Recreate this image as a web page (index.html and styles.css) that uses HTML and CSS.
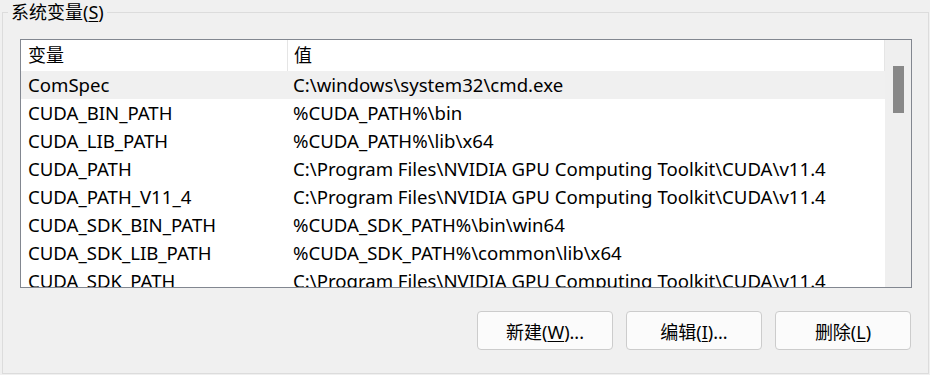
FILE: index.html
```html
<!DOCTYPE html>
<html lang="zh">
<head>
<meta charset="utf-8">
<title>系统变量</title>
<link rel="stylesheet" href="styles.css">
</head>
<body>
<div class="group">
  <div class="group-title">系统变量(<u>S</u>)</div>
  <div class="list">
    <div class="list-main">
      <div class="row header">
        <div class="c1">变量</div>
        <div class="c2">值</div>
      </div>
      <div class="row hl"><div class="c1">ComSpec</div><div class="c2">C:\windows\system32\cmd.exe</div></div>
      <div class="row"><div class="c1">CUDA_BIN_PATH</div><div class="c2">%CUDA_PATH%\bin</div></div>
      <div class="row"><div class="c1">CUDA_LIB_PATH</div><div class="c2">%CUDA_PATH%\lib\x64</div></div>
      <div class="row"><div class="c1">CUDA_PATH</div><div class="c2">C:\Program Files\NVIDIA GPU Computing Toolkit\CUDA\v11.4</div></div>
      <div class="row"><div class="c1">CUDA_PATH_V11_4</div><div class="c2">C:\Program Files\NVIDIA GPU Computing Toolkit\CUDA\v11.4</div></div>
      <div class="row"><div class="c1">CUDA_SDK_BIN_PATH</div><div class="c2">%CUDA_SDK_PATH%\bin\win64</div></div>
      <div class="row"><div class="c1">CUDA_SDK_LIB_PATH</div><div class="c2">%CUDA_SDK_PATH%\common\lib\x64</div></div>
      <div class="row"><div class="c1">CUDA_SDK_PATH</div><div class="c2">C:\Program Files\NVIDIA GPU Computing Toolkit\CUDA\v11.4</div></div>
    </div>
    <div class="scrollbar"><div class="thumb"></div></div>
  </div>
  <div class="buttons">
    <button class="btn">新建(<u>W</u>)...</button>
    <button class="btn">编辑(<u>I</u>)...</button>
    <button class="btn">删除(<u>L</u>)</button>
  </div>
</div>
</body>
</html>
```
FILE: styles.css
```css
html, body {
  margin: 0;
  padding: 0;
  background: #f0f0f0;
  font-family: "Noto Sans", "Noto Sans CJK SC", sans-serif;
  font-size: 18.6px;
  color: #000;
  overflow: hidden;
}
.group {
  position: relative;
  margin: 12px 2px 0 2px;
  height: 334px;
  border: 1px solid #dcdcdc;
  padding: 26px 16px 0 17px;
  width: 892px;
}
.group-title {
  position: absolute;
  top: -12px;
  left: 5px;
  padding: 0 3px;
  background: #f0f0f0;
  line-height: 22px;
  font-size: 18px;
}
.group-title u { text-underline-offset: 2px; }
.list {
  display: flex;
  height: 247px;
  border: 1px solid #828790;
  background: #fff;
  overflow: hidden;
}
.list-main {
  flex: 1;
  overflow: hidden;
}
.row {
  display: flex;
  height: 28px;
  line-height: 28px;
  white-space: nowrap;
}
.row.header {
  height: 31px;
  line-height: 31px;
  border-right: 1px solid #e5e5e5;
  font-size: 18px;
}
.row.hl { background: #f0f0f0; }
.c1 {
  width: 259px;
  padding-left: 7px;
  flex: none;
}
.header .c1 { border-right: 1px solid #e5e5e5; }
.c2 {
  padding-left: 6px;
}
.scrollbar {
  width: 26px;
  flex: none;
  background: #efefef;
  position: relative;
}
.thumb {
  position: absolute;
  left: 8px;
  top: 26px;
  width: 11px;
  height: 47px;
  background: #888888;
}
.buttons {
  display: flex;
  justify-content: flex-end;
  gap: 13px;
  margin-top: 23px;
  padding-right: 1px;
}
.btn {
  width: 136px;
  height: 39px;
  background: #fbfbfb;
  border: 1px solid #cccccc;
  border-radius: 4px;
  font-family: "Noto Sans", "Noto Sans CJK SC", sans-serif;
  font-size: 18px;
  color: #000;
  padding: 0;
}
.btn u { text-underline-offset: 2px; }
```
